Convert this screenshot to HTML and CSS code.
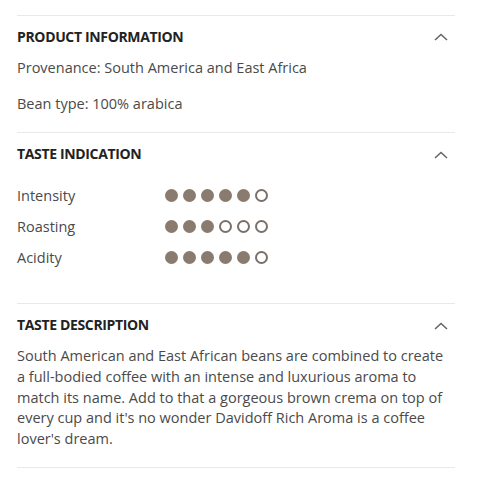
FILE: index.html
```html
<!DOCTYPE html>
<html>
<head>
<meta charset="utf-8">
<link rel="stylesheet" href="styles.css">
</head>
<body>
<div class="panel">
  <section class="sect">
    <div class="head">
      <h2>PRODUCT INFORMATION</h2>
      <svg class="chev" width="14" height="8" viewBox="0 0 14 8"><path d="M1 7 L7 1.5 L13 7" fill="none" stroke="#666" stroke-width="1.6"/></svg>
    </div>
    <div class="body">
      <p class="line">Provenance: South America and East Africa</p>
      <p class="line second">Bean type: 100% arabica</p>
    </div>
  </section>
  <section class="sect">
    <div class="head">
      <h2>TASTE INDICATION</h2>
      <svg class="chev" width="14" height="8" viewBox="0 0 14 8"><path d="M1 7 L7 1.5 L13 7" fill="none" stroke="#666" stroke-width="1.6"/></svg>
    </div>
    <div class="body rates">
      <div class="rate"><span class="label">Intensity</span><span class="dots"><i class="on"></i><i class="on"></i><i class="on"></i><i class="on"></i><i class="on"></i><i></i></span></div>
      <div class="rate"><span class="label">Roasting</span><span class="dots"><i class="on"></i><i class="on"></i><i class="on"></i><i></i><i></i><i></i></span></div>
      <div class="rate"><span class="label">Acidity</span><span class="dots"><i class="on"></i><i class="on"></i><i class="on"></i><i class="on"></i><i class="on"></i><i></i></span></div>
    </div>
  </section>
  <section class="sect last">
    <div class="head">
      <h2>TASTE DESCRIPTION</h2>
      <svg class="chev" width="14" height="8" viewBox="0 0 14 8"><path d="M1 7 L7 1.5 L13 7" fill="none" stroke="#666" stroke-width="1.6"/></svg>
    </div>
    <div class="body desc-wrap">
      <p class="desc">South American and East African beans are combined to create a full-bodied coffee with an intense and luxurious aroma to match its name. Add to that a gorgeous brown crema on top of every cup and it's no wonder Davidoff Rich Aroma is a coffee lover's dream.</p>
    </div>
  </section>
</div>
</body>
</html>
```
FILE: styles.css
```css
html, body {
  margin: 0;
  padding: 0;
  background: #fff;
}
body {
  font-family: "Open Sans", "Noto Sans", sans-serif;
  color: #4a4a4a;
  font-size: 14.5px;
}
.panel {
  margin: 15px 0 0 17px;
  width: 438px;
}
.sect {
  border-top: 1px solid #e9e9e9;
}
.sect.last {
  border-bottom: 1px solid #e9e9e9;
}
.head {
  display: flex;
  align-items: center;
  justify-content: space-between;
  height: 37px;
  padding-top: 2px;
}
.sect:first-child .head {
  padding-top: 1px;
  height: 38px;
}
.head h2 {
  margin: 0;
  font-size: 14px;
  font-weight: 700;
  letter-spacing: -0.35px;
  color: #222;
}
.chev {
  margin-right: 7px;
  margin-top: 2px;
}
.body {
  padding-top: 2px;
}
.line {
  margin: 0;
  line-height: 22px;
  padding: 0 0 14px;
}
.line.second {
  padding-bottom: 17px;
}
.rates {
  padding: 12px 0 35px;
  display: flex;
  flex-direction: column;
  gap: 9px;
}
.rate {
  display: flex;
  align-items: center;
  height: 22px;
}
.label {
  width: 148px;
}
.dots {
  display: flex;
  gap: 5px;
}
.dots i {
  width: 13px;
  height: 13px;
  border-radius: 50%;
  box-sizing: border-box;
  border: 2px solid #7a7069;
}
.dots i.on {
  background: #8a7b6f;
  border-color: #8a7b6f;
}
.desc-wrap {
  padding-top: 3px;
}
.desc {
  margin: 0;
  padding-bottom: 17px;
  padding-right: 8px;
  line-height: 20.8px;
}
```
